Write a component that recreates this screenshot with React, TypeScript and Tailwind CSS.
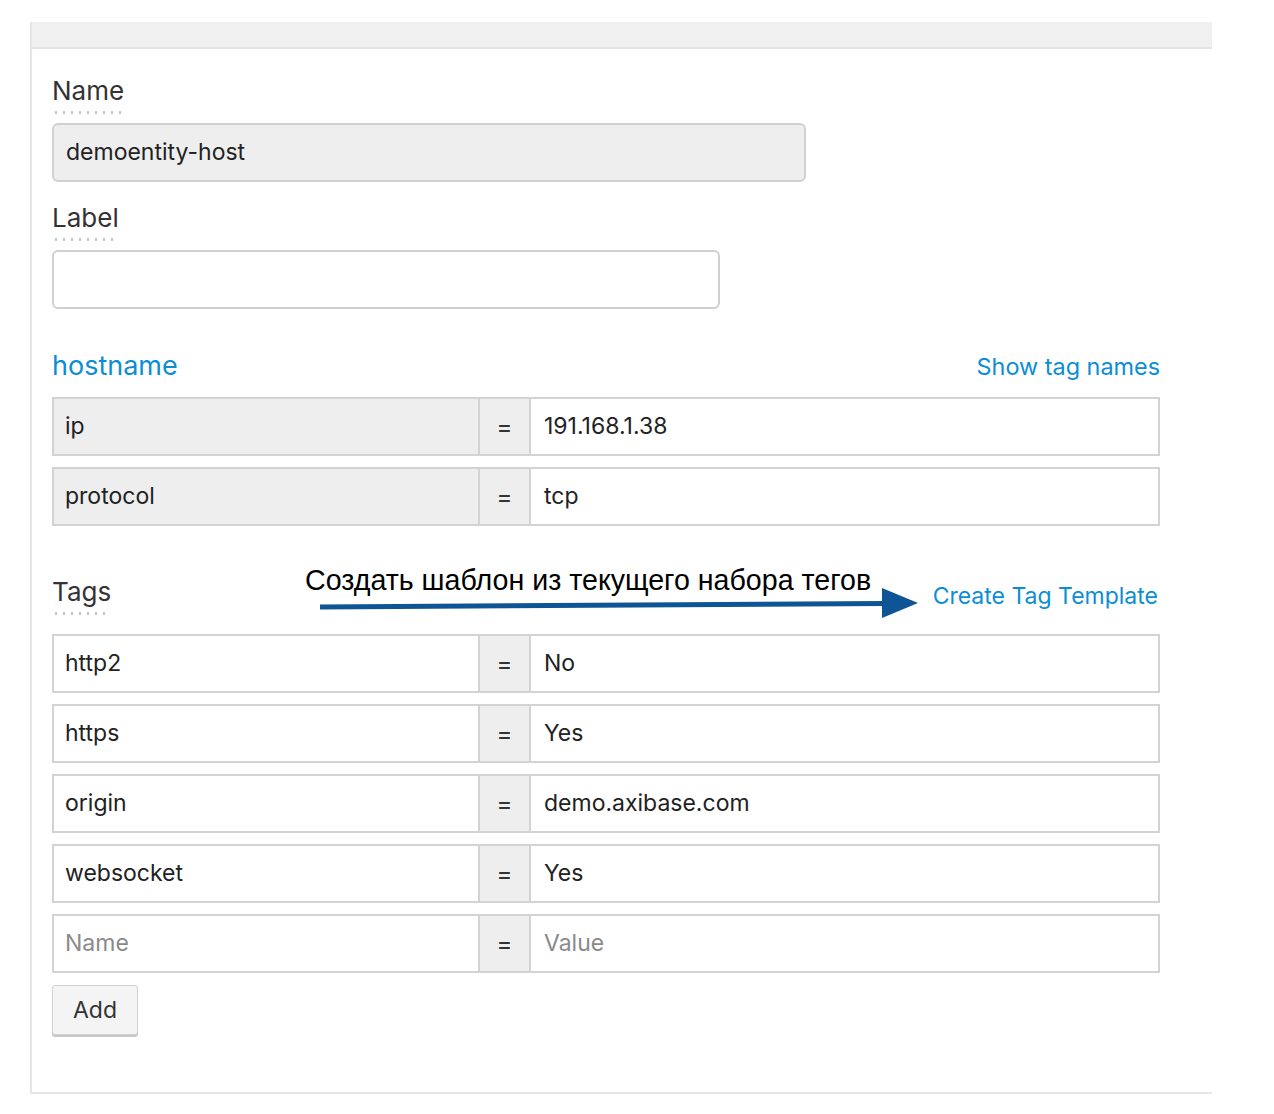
import React from 'react';

const UI_FONT = 'font-[Inter,"Noto_Sans",sans-serif]';

type Pair = { k: string; v: string; shaded?: boolean; placeholder?: boolean };

const entityTags: Pair[] = [
  { k: 'ip', v: '191.168.1.38', shaded: true },
  { k: 'protocol', v: 'tcp', shaded: true },
];

const tags: Pair[] = [
  { k: 'http2', v: 'No' },
  { k: 'https', v: 'Yes' },
  { k: 'origin', v: 'demo.axibase.com' },
  { k: 'websocket', v: 'Yes' },
  { k: 'Name', v: 'Value', placeholder: true },
];

function FieldLabel({ children, className = '' }: { children: React.ReactNode; className?: string }) {
  return (
    <div className={`inline-flex flex-col ${className}`}>
      <span className="text-[26px] leading-[32px] text-[#333]">{children}</span>
      {/* dotted underline */}
      <span className="mx-[1px] mt-[4px] h-[3px] bg-[radial-gradient(circle,#c6c6c6_1.1px,transparent_1.6px)] bg-[length:8px_3px] bg-[position:-1px_0]" />
    </div>
  );
}

function Row({ k, v, shaded, placeholder }: Pair) {
  const text = placeholder ? 'text-[#8a8a8a]' : 'text-[#222]';
  return (
    <div className="flex h-[59px] w-full border-2 border-[#d3d3d3] text-[23px]">
      <div className={`flex w-[424px] items-center pl-[11px] ${shaded ? 'bg-[#eeeeee]' : 'bg-white'} ${text}`}>{k}</div>
      <div className="flex w-[53px] items-center justify-center border-x-2 border-[#d3d3d3] bg-[#eeeeee] text-[24px] text-[#333]">=</div>
      <div className={`flex flex-1 items-center bg-white pl-[13px] ${text}`}>{v}</div>
    </div>
  );
}

export default function App() {
  return (
    <div className={`relative min-h-[1114px] bg-white pt-[22px] ${UI_FONT}`}>
      <div className="ml-[30px] w-[1182px] border-b-2 border-l-2 border-[#e6e6e6]">
        {/* header strip */}
        <div className="h-[27px] border-b-2 border-[#e4e4e4] bg-[#f0f0f0]" />

        <div className="w-[1128px] pb-[57px] pl-[20px] pt-[26px]">
          <FieldLabel>Name</FieldLabel>
          <div className="mt-[9px] flex h-[59px] w-[754px] items-center rounded-[6px] border-2 border-[#d0d0d0] bg-[#eeeeee] pl-[12px] text-[23px] text-[#222]">
            demoentity-host
          </div>

          <FieldLabel className="mt-[20px]">Label</FieldLabel>
          <div className="mt-[9px] h-[59px] w-[668px] rounded-[6px] border-2 border-[#d0d0d0] bg-white" />

          <div className="mt-[40px] flex items-baseline justify-between">
            <span className="text-[27px] leading-[34px] text-[#0b8ed4]">hostname</span>
            <span className="text-[23.4px] text-[#0b8ed4]">Show tag names</span>
          </div>

          <div className="mt-[13px] flex flex-col gap-[11px]">
            {entityTags.map((p) => (
              <Row key={p.k} {...p} />
            ))}
          </div>

          <div className="mt-[50px] flex items-start justify-between">
            <FieldLabel>Tags</FieldLabel>
            <span className="mr-[2px] mt-[3px] text-[23px] text-[#0b8ed4]">Create Tag Template</span>
          </div>

          <div className="mt-[19px] flex flex-col gap-[11px]">
            {tags.map((p) => (
              <Row key={p.k} {...p} />
            ))}
          </div>

          <button className="mt-[12px] flex h-[50px] w-[86px] items-center justify-center rounded-[3px] border border-[#d0d0d0] bg-[#f4f4f4] text-[23px] text-[#333] shadow-[0_2px_0_#c8c8c8]">
            Add
          </button>
        </div>
      </div>

      {/* annotation overlay */}
      <div className="absolute left-[305px] top-[566px] whitespace-nowrap font-['Liberation_Sans',Arial,sans-serif] text-[28.6px] leading-[28px] text-black">
        Создать шаблон из текущего набора тегов
      </div>
      <svg className="absolute left-[310px] top-[580px]" width="620" height="50" viewBox="310 580 620 50">
        <line x1="320" y1="607" x2="884" y2="603.5" stroke="#0e5596" strokeWidth="5" />
        <polygon points="882,588 918,603 882,618" fill="#0e5596" />
      </svg>
    </div>
  );
}
